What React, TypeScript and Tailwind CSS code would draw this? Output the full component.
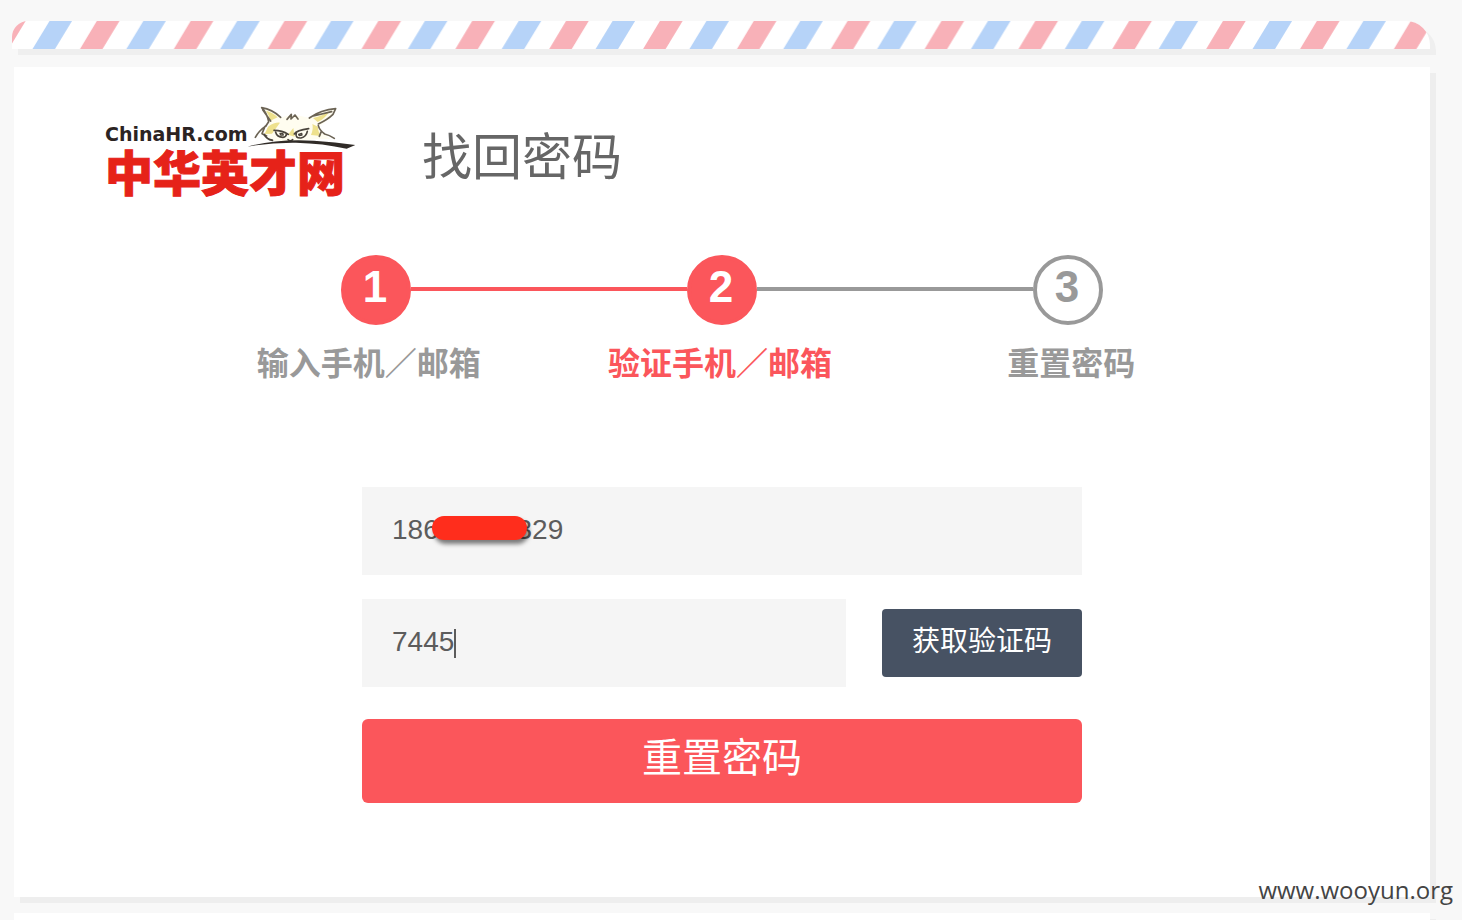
import { useState } from 'react'

const steps = [
   { id: 1, label: '输入手机／邮箱' },
   { id: 2, label: '验证手机／邮箱' },
   { id: 3, label: '重置密码' },
]

const CURRENT_STEP = 2

function StripeBar() {
   return (
      <div className="ml-3 mr-8 h-7 overflow-hidden rounded-tl-2xl rounded-tr-3xl bg-white shadow-[6px_6px_0_#efefef]">
         <svg className="block h-full w-full" aria-hidden="true">
            <defs>
               <pattern id="airmail" width="93.85" height="28" patternUnits="userSpaceOnUse">
                  <path d="M37.5 0H60L43 28H20.5Z" fill="#b6d3f8" />
                  <path d="M84.8 0H107.5L90.5 28H68Z" fill="#f8b1b8" />
                  <path d="M-9.05 0H13.65L-3.35 28H-25.85Z" fill="#f8b1b8" />
               </pattern>
            </defs>
            <rect width="100%" height="28" fill="url(#airmail)" />
         </svg>
      </div>
   )
}

function Logo() {
   return (
      <svg className="overflow-visible" width="250" height="88" viewBox="0 0 250 88" role="img" aria-label="ChinaHR.com 中华英才网">
         <text x="-1" y="34" fontSize="19" fontWeight="700" fill="#2b2322" fontFamily="'DejaVu Sans', sans-serif">ChinaHR.com</text>
         <text x="-1" y="84" fontSize="48" fontWeight="900" fill="#e62219" stroke="#e62219" strokeWidth="1" fontFamily="'Noto Sans CJK SC', sans-serif">中华英才网</text>
         <g transform="translate(124 -7) scale(.3333)" strokeLinecap="round" strokeLinejoin="round">
            <path d="M95 23L116 65Q120 79 103 101L128 122Q190 128 262 117L302 117Q276 101 267 79Q298 60 316 27Q275 28 239 54Q184 38 151 54Q130 31 95 23Z" fill="#fffdf0" />
            <path d="M108 32Q119 49 121 62L143 52Q128 37 108 32ZM249 54Q280 47 300 32Q284 57 263 66L249 54ZM114 80Q134 66 150 68L126 101L104 102ZM247 72L264 80Q263 93 273 108L243 105Q251 86 247 72ZM174 104L190 84L194 110Z" fill="#eee18d" />
            <g fill="none" stroke="#6b6354" strokeWidth="5">
               <path d="M152 52Q127 28 95 23Q111 39 116 65L108 77M98 29L122 63" />
               <path d="M238 54Q273 29 317 26L309 43Q294 58 265 72M250 48L305 35" />
               <path d="M171 58L184 43L183 57L195 45L204 57" />
               <path d="M109 77Q87 92 76 112M105 79L96 101L110 108" />
               <path d="M265 77Q268 90 284 102Q298 105 313 115M274 94L268 109" />
            </g>
            <g fill="none" stroke="#4a443c">
               <path d="M103 104Q110 118 127 121" strokeWidth="6" />
               <path d="M132 91Q157 91 175 103M137 97Q141 112 159 112Q169 111 170 101" strokeWidth="5" />
               <path d="M150 100L158 100L160 105L152 105Z" strokeWidth="4" />
               <path d="M193 102Q200 91 236 86M199 99Q194 115 213 114Q229 110 232 94" strokeWidth="5" />
               <path d="M206 103L215 100L216 105L208 107Z" strokeWidth="4" />
               <path d="M174 119Q181 126 188 119" strokeWidth="5" />
            </g>
            <path d="M52 140Q143 115 252 122Q316 126 376 135L350 146Q279 130 198 128Q125 127 52 140Z" fill="#302b27" />
         </g>
      </svg>
   )
}

function Steps() {
   return (
      <div className="mt-[60px]">
         <div className="mx-auto flex w-[762px] max-w-full items-center font-['Liberation_Sans',sans-serif]">
            {
               steps.map(({ id }) => (
                  <div key={id} className={id > 1 ? 'flex flex-1 items-center' : 'flex items-center'}>
                     {id > 1 && <div className={`mb-0.5 h-1 flex-1 ${id <= CURRENT_STEP ? 'bg-[#fb565b]' : 'bg-[#999]'}`}></div>}
                     <div className={`flex size-[70px] items-center justify-center rounded-full border-4 pb-1.5 pr-0.5 text-[44px] leading-none font-bold ${id <= CURRENT_STEP ? 'border-[#fb565b] bg-[#fb565b] text-white' : 'border-[#999] bg-white text-[#999]'}`}>
                        {id}
                     </div>
                  </div>
               ))
            }
         </div>
         <div className="mx-auto mt-3 grid w-[1058px] max-w-full grid-cols-3 pr-1 text-center text-[32px] leading-[48px] font-bold">
            {
               steps.map(({ id, label }) => (
                  <p key={id} className={id === CURRENT_STEP ? 'text-[#fb565b]' : 'text-[#999]'}>{label}</p>
               ))
            }
         </div>
      </div>
   )
}

export default function App() {

   const [account, setAccount] = useState('186          329')
   const [code, setCode] = useState('7445')

   return (
      <main className="relative flex min-h-screen flex-col overflow-hidden bg-[#f8f8f8] pt-[21px] font-['Noto_Sans_CJK_SC',sans-serif]">
         <StripeBar />

         <section className="ml-[14px] mr-8 mt-[18px] bg-white pb-[94px] pt-10 shadow-[6px_6px_0_#eeeeee]">
            <header className="flex items-end gap-[66px] pl-[92px]">
               <Logo />
               <h1 className="pb-1 text-[50px] leading-[76px] text-[#666]">找回密码</h1>
            </header>

            <Steps />

            <form className="mx-auto mt-[102px] w-[720px] max-w-full text-[28px] text-[#5c5c5c]" onSubmit={e => e.preventDefault()}>
               <div className="relative">
                  <input
                     aria-label="手机／邮箱"
                     value={account}
                     onChange={e => setAccount(e.target.value)}
                     className="block h-[88px] w-full bg-[#f5f5f5] px-[30px] pb-0.5 font-['Liberation_Sans',sans-serif] outline-none"
                  />
                  <span className="absolute left-[70px] top-[29px] h-6 w-[95px] rounded-full bg-[#ff2d1c] shadow-[2px_4px_4px_rgba(0,0,0,0.5)]"></span>
               </div>

               <div className="mt-6 flex items-center gap-9">
                  <div className="relative flex-1">
                     <input
                        aria-label="验证码"
                        value={code}
                        onChange={e => setCode(e.target.value)}
                        className="block h-[88px] w-full bg-[#f5f5f5] px-[30px] pb-0.5 font-['Liberation_Sans',sans-serif] outline-none"
                     />
                     {/* text cursor */}
                     <span className="absolute left-[92px] top-[30px] h-[29px] w-0.5 bg-[#5c5c5c]"></span>
                  </div>
                  <button type="button" className="h-[68px] w-[200px] rounded bg-[#475263] pb-2 text-white">获取验证码</button>
               </div>

               <button type="submit" className="mt-8 block h-[84px] w-full rounded-md bg-[#fb565b] pb-3 text-[40px] leading-none text-white">重置密码</button>
            </form>
         </section>

         <div className="ml-[14px] mr-8 mt-4 flex-1 bg-white shadow-[6px_6px_0_#eeeeee]"></div>

         <p className="absolute bottom-3 right-[9px] font-['Open_Sans',sans-serif] text-[24px] leading-9 text-[#444]">www.wooyun.org</p>
      </main>
   )
}
